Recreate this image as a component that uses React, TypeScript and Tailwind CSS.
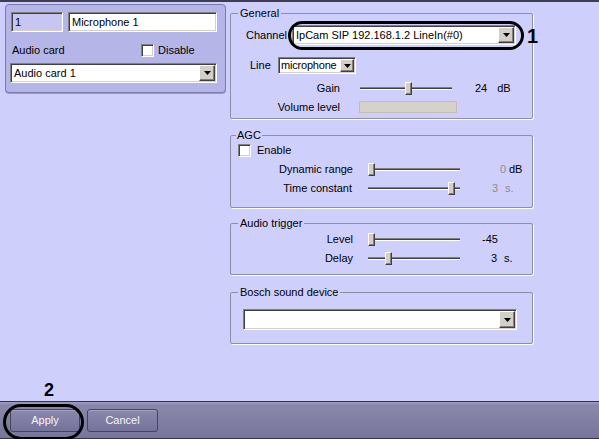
import React from "react";

const sunken =
  "border border-t-[#808080] border-l-[#808080] border-b-white border-r-white shadow-[inset_1px_1px_0_#404040,inset_-1px_-1px_0_#d4d0c8]";

function DropBtn({ w = "w-[16px]" }: { w?: string }) {
  return (
    <div className={`h-full ${w} shrink-0 flex items-center justify-center bg-[#d4d0c8] border border-t-white border-l-white border-b-[#404040] border-r-[#404040] shadow-[inset_-1px_-1px_0_#808080]`}>
      <svg width="7" height="4" viewBox="0 0 7 4">
        <polygon points="0,0 7,0 3.5,4" fill="#000" />
      </svg>
    </div>
  );
}

function Select({ w, h, text, btn, pad = "pl-[2px]" }: { w: string; h: string; text: string; btn?: string; pad?: string }) {
  return (
    <div className={`${w} ${h} ${sunken} bg-white flex items-center p-[1px]`}>
      <div className={`flex-1 ${pad} whitespace-nowrap overflow-hidden`}>{text}</div>
      <DropBtn w={btn} />
    </div>
  );
}

function Slider({ pos }: { pos: number }) {
  return (
    <div className="relative w-[92px] h-[13px] shrink-0">
      <div className="absolute left-0 right-0 top-[5px] h-[3px] border-t border-t-[#808080] border-b border-b-white bg-[#404040]" />
      <div
        className="absolute top-0 w-[7px] h-[13px] bg-[#d4d0c8] border border-t-white border-l-white border-b-[#404040] border-r-[#404040] shadow-[inset_-1px_-1px_0_#808080]"
        style={{ left: pos }}
      />
    </div>
  );
}

function Check() {
  return <div className={`w-[13px] h-[13px] shrink-0 bg-white ${sunken}`} />;
}

function Group({
  title,
  cls,
  children,
  legendCls = "ml-[7px] px-[2px]",
}: {
  title: string;
  cls: string;
  children?: React.ReactNode;
  legendCls?: string;
}) {
  return (
    <fieldset className={`border border-[#8e8eaa] rounded-[2px] w-[303px] shrink-0 shadow-[1px_1px_0_#ffffff] ${cls}`}>
      <legend className={`${legendCls} leading-[13px]`}>{title}</legend>
      {children}
    </fieldset>
  );
}

export default function App() {
  return (
    <div className="relative w-[599px] h-[439px] overflow-hidden bg-[#cfcffc] flex flex-col font-['Liberation_Sans',Arial,sans-serif] text-[11px] leading-[13px] text-black border-t-2 border-[#3e3d52]">
      <div className="flex-1 flex pl-[5px] pt-[2px]">
        {/* left panel */}
        <div className="w-[221px] h-[89px] border border-[#7a7aac] rounded-[4px] bg-[#b5b5e8] flex flex-col shadow-[0_1px_0_#9a9acc]">
          <div className="mt-[7px] pl-[5px] flex gap-[5px]">
            <div className={`w-[52px] h-[20px] ${sunken} bg-[#c6c6f0] flex items-center pl-[3px]`}>1</div>
            <div className={`w-[149px] h-[20px] ${sunken} bg-white flex items-center pl-[3px]`}>Microphone 1</div>
          </div>
          <div className="mt-[12px] h-[13px] flex items-center">
            <div className="ml-[6px] w-[129px]">Audio card</div>
            <Check />
            <div className="ml-[4px]">Disable</div>
          </div>
          <div className="mt-[6px] ml-[4px]">
            <Select w="w-[207px]" h="h-[20px]" text="Audio card 1" />
          </div>
        </div>

        {/* right column */}
        <div className="ml-[4px] mt-[3px] flex flex-col">
          <Group title="General" cls="h-[112px]">
            <div className="mt-[5px] h-[20px] flex items-center">
              <div className="ml-[15px] w-[46px]">Channel</div>
              <Select w="w-[224px]" h="h-[20px]" text="IpCam SIP 192.168.1.2 LineIn(#0)" />
            </div>
            <div className="mt-[12px] h-[17px] flex items-center">
              <div className="ml-[19px] w-[28px]">Line</div>
              <Select w="w-[78px]" h="h-[17px]" text="microphone" btn="w-[14px]" pad="pl-[1px] tracking-[-0.2px]" />
            </div>
            <div className="mt-[8px] h-[13px] flex items-center">
              <div className="w-[109px] text-right">Gain</div>
              <div className="ml-[20px]">
                <Slider pos={45} />
              </div>
              <div className="ml-[23px]">24</div>
              <div className="ml-[10px]">dB</div>
            </div>
            <div className="mt-[6px] h-[12px] flex items-center">
              <div className="w-[109px] text-right">Volume level</div>
              <div className="ml-[19px] w-[98px] h-[12px] bg-[#d6d2ca] border border-[#c2beb6]" />
            </div>
          </Group>

          <Group title="AGC" cls="mt-[10px] h-[79px]" legendCls="ml-[5px] px-[1px]">
            <div className="mt-[2px] h-[13px] flex items-center ml-[7px]">
              <Check />
              <div className="ml-[6px]">Enable</div>
            </div>
            <div className="mt-[6px] h-[13px] flex items-center">
              <div className="w-[122px] text-right">Dynamic range</div>
              <div className="ml-[15px]">
                <Slider pos={0} />
              </div>
              <div className="w-[46px] text-right text-[#8c8c8c]">0</div>
              <div className="ml-[3px]">dB</div>
            </div>
            <div className="mt-[6px] h-[13px] flex items-center">
              <div className="w-[121px] text-right">Time constant</div>
              <div className="ml-[16px]">
                <Slider pos={80} />
              </div>
              <div className="w-[38px] text-right text-[#8c8c8c]">3</div>
              <div className="ml-[7px] text-[#8c8c8c]">s.</div>
            </div>
          </Group>

          <Group title="Audio trigger" cls="mt-[9px] h-[58px]">
            <div className="mt-[3px] h-[13px] flex items-center">
              <div className="w-[122px] text-right">Level</div>
              <div className="ml-[15px]">
                <Slider pos={0} />
              </div>
              <div className="w-[38px] text-right">-45</div>
            </div>
            <div className="mt-[6px] h-[13px] flex items-center">
              <div className="w-[122px] text-right">Delay</div>
              <div className="ml-[15px]">
                <Slider pos={17} />
              </div>
              <div className="w-[37px] text-right">3</div>
              <div className="ml-[7px]">s.</div>
            </div>
          </Group>

          <Group title="Bosch sound device" cls="mt-[11px] h-[58px]">
            <div className="mt-[10px] ml-[12px]">
              <Select w="w-[274px]" h="h-[21px]" text="" />
            </div>
          </Group>
        </div>
      </div>

      {/* bottom bar */}
      <div className="h-[38px] shrink-0 border-t border-b border-[#35344a] bg-linear-to-b from-[#8b89ad] to-[#77759b] shadow-[inset_0_2px_0_#9896b8] flex items-center pl-[10px] gap-[7px]">
        <button className="w-[70px] h-[23px] rounded-[3px] border border-[#45435e] bg-linear-to-b from-[#8a88ac] to-[#75739a] shadow-[inset_0_1px_0_#a4a2c2] text-[#f4f4f8] text-[11px]">
          Apply
        </button>
        <button className="w-[71px] h-[23px] rounded-[3px] border border-[#45435e] bg-linear-to-b from-[#8a88ac] to-[#75739a] shadow-[inset_0_1px_0_#a4a2c2] text-[#f4f4f8] text-[11px]">
          Cancel
        </button>
      </div>

      {/* annotations */}
      <div className="absolute left-[288px] top-[19px] w-[236px] h-[29px] border-[3px] border-black rounded-full" />
      <div className="absolute left-[527px] top-[24px] text-[20px] leading-[20px] font-bold">1</div>
      <div className="absolute left-[3px] top-[402px] w-[81px] h-[36px] border-[3px] border-black rounded-full" />
      <div className="absolute left-[44px] top-[379px] text-[18px] leading-[18px] font-bold">2</div>
    </div>
  );
}
